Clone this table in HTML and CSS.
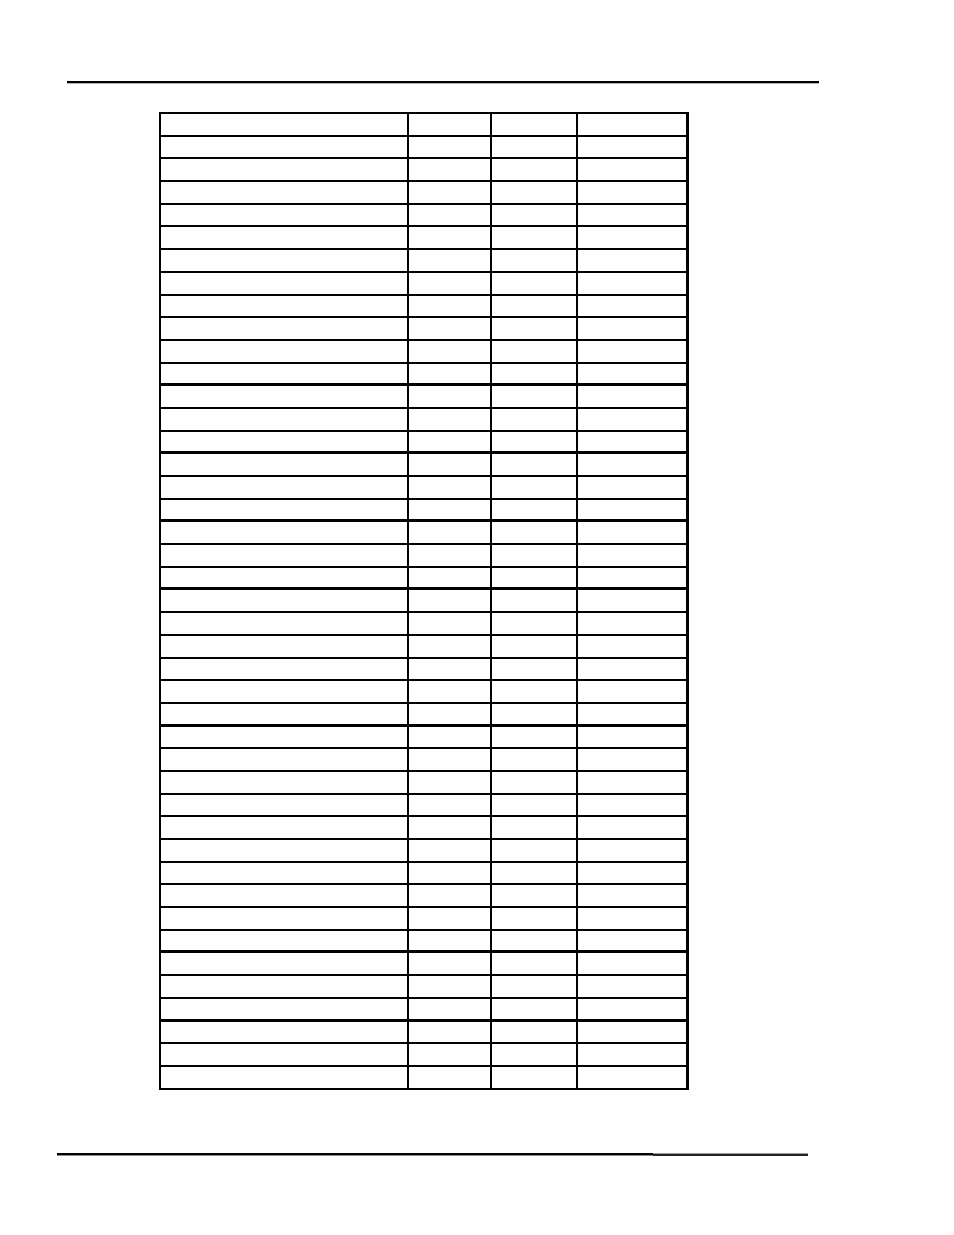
FILE: index.html
```html
<!DOCTYPE html>
<html>
<head>
<meta charset="utf-8">
<link rel="stylesheet" href="styles.css">
</head>
<body>
<div class="page">
  <div class="rule-top"></div>
  <div class="grid">
    <div class="row"><div class="c"></div><div class="c"></div><div class="c"></div><div class="c"></div></div>
    <div class="row"><div class="c"></div><div class="c"></div><div class="c"></div><div class="c"></div></div>
    <div class="row"><div class="c"></div><div class="c"></div><div class="c"></div><div class="c"></div></div>
    <div class="row"><div class="c"></div><div class="c"></div><div class="c"></div><div class="c"></div></div>
    <div class="row"><div class="c"></div><div class="c"></div><div class="c"></div><div class="c"></div></div>
    <div class="row"><div class="c"></div><div class="c"></div><div class="c"></div><div class="c"></div></div>
    <div class="row"><div class="c"></div><div class="c"></div><div class="c"></div><div class="c"></div></div>
    <div class="row"><div class="c"></div><div class="c"></div><div class="c"></div><div class="c"></div></div>
    <div class="row"><div class="c"></div><div class="c"></div><div class="c"></div><div class="c"></div></div>
    <div class="row"><div class="c"></div><div class="c"></div><div class="c"></div><div class="c"></div></div>
    <div class="row"><div class="c"></div><div class="c"></div><div class="c"></div><div class="c"></div></div>
    <div class="row thick"><div class="c"></div><div class="c"></div><div class="c"></div><div class="c"></div></div>
    <div class="row"><div class="c"></div><div class="c"></div><div class="c"></div><div class="c"></div></div>
    <div class="row"><div class="c"></div><div class="c"></div><div class="c"></div><div class="c"></div></div>
    <div class="row thick"><div class="c"></div><div class="c"></div><div class="c"></div><div class="c"></div></div>
    <div class="row"><div class="c"></div><div class="c"></div><div class="c"></div><div class="c"></div></div>
    <div class="row"><div class="c"></div><div class="c"></div><div class="c"></div><div class="c"></div></div>
    <div class="row thick"><div class="c"></div><div class="c"></div><div class="c"></div><div class="c"></div></div>
    <div class="row"><div class="c"></div><div class="c"></div><div class="c"></div><div class="c"></div></div>
    <div class="row"><div class="c"></div><div class="c"></div><div class="c"></div><div class="c"></div></div>
    <div class="row thick"><div class="c"></div><div class="c"></div><div class="c"></div><div class="c"></div></div>
    <div class="row"><div class="c"></div><div class="c"></div><div class="c"></div><div class="c"></div></div>
    <div class="row"><div class="c"></div><div class="c"></div><div class="c"></div><div class="c"></div></div>
    <div class="row"><div class="c"></div><div class="c"></div><div class="c"></div><div class="c"></div></div>
    <div class="row"><div class="c"></div><div class="c"></div><div class="c"></div><div class="c"></div></div>
    <div class="row"><div class="c"></div><div class="c"></div><div class="c"></div><div class="c"></div></div>
    <div class="row thick"><div class="c"></div><div class="c"></div><div class="c"></div><div class="c"></div></div>
    <div class="row"><div class="c"></div><div class="c"></div><div class="c"></div><div class="c"></div></div>
    <div class="row"><div class="c"></div><div class="c"></div><div class="c"></div><div class="c"></div></div>
    <div class="row"><div class="c"></div><div class="c"></div><div class="c"></div><div class="c"></div></div>
    <div class="row"><div class="c"></div><div class="c"></div><div class="c"></div><div class="c"></div></div>
    <div class="row"><div class="c"></div><div class="c"></div><div class="c"></div><div class="c"></div></div>
    <div class="row"><div class="c"></div><div class="c"></div><div class="c"></div><div class="c"></div></div>
    <div class="row"><div class="c"></div><div class="c"></div><div class="c"></div><div class="c"></div></div>
    <div class="row"><div class="c"></div><div class="c"></div><div class="c"></div><div class="c"></div></div>
    <div class="row"><div class="c"></div><div class="c"></div><div class="c"></div><div class="c"></div></div>
    <div class="row thick"><div class="c"></div><div class="c"></div><div class="c"></div><div class="c"></div></div>
    <div class="row"><div class="c"></div><div class="c"></div><div class="c"></div><div class="c"></div></div>
    <div class="row"><div class="c"></div><div class="c"></div><div class="c"></div><div class="c"></div></div>
    <div class="row thick"><div class="c"></div><div class="c"></div><div class="c"></div><div class="c"></div></div>
    <div class="row"><div class="c"></div><div class="c"></div><div class="c"></div><div class="c"></div></div>
    <div class="row"><div class="c"></div><div class="c"></div><div class="c"></div><div class="c"></div></div>
    <div class="row last"><div class="c"></div><div class="c"></div><div class="c"></div><div class="c"></div></div>
  </div>
  <div class="rule-bottom">
    <div class="rb-dark"></div>
    <div class="rb-light"></div>
  </div>
</div>
</body>
</html>
```

FILE: styles.css
```css
* { box-sizing: border-box; }
html, body {
  margin: 0;
  padding: 0;
  background: #fff;
  font-family: "Liberation Sans", Arial, sans-serif;
}
.page {
  width: 954px;
  height: 1235px;
  padding-top: 81px;
}
.rule-top {
  margin-left: 67px;
  width: 752px;
  height: 3px;
  border-top: 2px solid #000;
  border-bottom: 1px solid #b0b0b0;
}
.grid {
  margin-top: 28px;
  margin-left: 159px;
  width: 530px;
  border-top: 2px solid #000;
  border-left: 2px solid #000;
  border-right: 3px solid #000;
}
.row {
  display: grid;
  grid-template-columns: 248px 83px 86px 108px;
  height: 22.7px;
  border-bottom: 2px solid #000;
}
.row.thick {
  border-bottom-width: 3px;
}
.c {
  border-right: 2px solid #000;
}
.c:last-child {
  border-right: none;
}
.rule-bottom {
  margin-top: 63px;
  margin-left: 57px;
  width: 751px;
  display: flex;
}
.rb-dark {
  width: 596px;
  height: 3px;
  border-top: 2px solid #000;
  border-bottom: 1px solid #888;
}
.rb-light {
  flex: 1;
  height: 3px;
  border-top: 1px solid #999;
  border-bottom: 2px solid #222;
}
```
